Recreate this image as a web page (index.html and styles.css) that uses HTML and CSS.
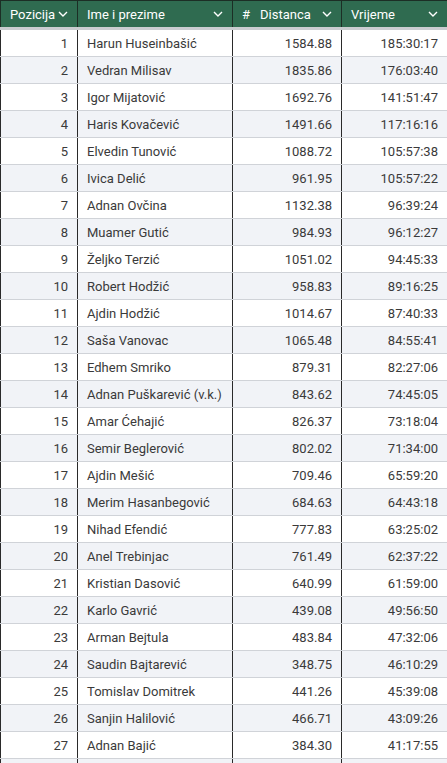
FILE: index.html
```html
<!DOCTYPE html>
<html lang="bs">
<head>
<meta charset="utf-8">
<link rel="stylesheet" href="styles.css">
</head>
<body>
<table class="grid">
<colgroup><col class="c1"><col class="c2"><col class="c3"><col class="c4"></colgroup>
<thead>
<tr>
<th><div class="hd"><span>Pozicija</span><svg class="chev" viewBox="0 0 10 6"><path d="M1 1l4 4 4-4" /></svg></div></th>
<th><div class="hd"><span>Ime i prezime</span><svg class="chev" viewBox="0 0 10 6"><path d="M1 1l4 4 4-4" /></svg></div></th>
<th><div class="hd"><span class="hash">#</span><span class="grow">Distanca</span><svg class="chev" viewBox="0 0 10 6"><path d="M1 1l4 4 4-4" /></svg></div></th>
<th><div class="hd"><span>Vrijeme</span><svg class="chev" viewBox="0 0 10 6"><path d="M1 1l4 4 4-4" /></svg></div></th>
</tr>
</thead>
<tbody>
<tr><td class="num">1</td><td>Harun Huseinbašić</td><td class="num">1584.88</td><td class="num">185:30:17</td></tr>
<tr><td class="num">2</td><td>Vedran Milisav</td><td class="num">1835.86</td><td class="num">176:03:40</td></tr>
<tr><td class="num">3</td><td>Igor Mijatović</td><td class="num">1692.76</td><td class="num">141:51:47</td></tr>
<tr><td class="num">4</td><td>Haris Kovačević</td><td class="num">1491.66</td><td class="num">117:16:16</td></tr>
<tr><td class="num">5</td><td>Elvedin Tunović</td><td class="num">1088.72</td><td class="num">105:57:38</td></tr>
<tr><td class="num">6</td><td>Ivica Delić</td><td class="num">961.95</td><td class="num">105:57:22</td></tr>
<tr><td class="num">7</td><td>Adnan Ovčina</td><td class="num">1132.38</td><td class="num">96:39:24</td></tr>
<tr><td class="num">8</td><td>Muamer Gutić</td><td class="num">984.93</td><td class="num">96:12:27</td></tr>
<tr><td class="num">9</td><td>Željko Terzić</td><td class="num">1051.02</td><td class="num">94:45:33</td></tr>
<tr><td class="num">10</td><td>Robert Hodžić</td><td class="num">958.83</td><td class="num">89:16:25</td></tr>
<tr><td class="num">11</td><td>Ajdin Hodžić</td><td class="num">1014.67</td><td class="num">87:40:33</td></tr>
<tr><td class="num">12</td><td>Saša Vanovac</td><td class="num">1065.48</td><td class="num">84:55:41</td></tr>
<tr><td class="num">13</td><td>Edhem Smriko</td><td class="num">879.31</td><td class="num">82:27:06</td></tr>
<tr><td class="num">14</td><td>Adnan Puškarević (v.k.)</td><td class="num">843.62</td><td class="num">74:45:05</td></tr>
<tr><td class="num">15</td><td>Amar Ćehajić</td><td class="num">826.37</td><td class="num">73:18:04</td></tr>
<tr><td class="num">16</td><td>Semir Beglerović</td><td class="num">802.02</td><td class="num">71:34:00</td></tr>
<tr><td class="num">17</td><td>Ajdin Mešić</td><td class="num">709.46</td><td class="num">65:59:20</td></tr>
<tr><td class="num">18</td><td>Merim Hasanbegović</td><td class="num">684.63</td><td class="num">64:43:18</td></tr>
<tr><td class="num">19</td><td>Nihad Efendić</td><td class="num">777.83</td><td class="num">63:25:02</td></tr>
<tr><td class="num">20</td><td>Anel Trebinjac</td><td class="num">761.49</td><td class="num">62:37:22</td></tr>
<tr><td class="num">21</td><td>Kristian Dasović</td><td class="num">640.99</td><td class="num">61:59:00</td></tr>
<tr><td class="num">22</td><td>Karlo Gavrić</td><td class="num">439.08</td><td class="num">49:56:50</td></tr>
<tr><td class="num">23</td><td>Arman Bejtula</td><td class="num">483.84</td><td class="num">47:32:06</td></tr>
<tr><td class="num">24</td><td>Saudin Bajtarević</td><td class="num">348.75</td><td class="num">46:10:29</td></tr>
<tr><td class="num">25</td><td>Tomislav Domitrek</td><td class="num">441.26</td><td class="num">45:39:08</td></tr>
<tr><td class="num">26</td><td>Sanjin Halilović</td><td class="num">466.71</td><td class="num">43:09:26</td></tr>
<tr><td class="num">27</td><td>Adnan Bajić</td><td class="num">384.30</td><td class="num">41:17:55</td></tr>
<tr class="cut"><td></td><td></td><td></td><td></td></tr>
</tbody>
</table>
</body>
</html>
```
FILE: styles.css
```css
html, body {
  margin: 0;
  padding: 0;
  background: #ffffff;
}
body {
  font-family: Roboto, "Liberation Sans", Arial, sans-serif;
  font-size: 13px;
  color: #3a3a3a;
  overflow: hidden;
}
.grid {
  border-collapse: collapse;
  table-layout: fixed;
  width: 447px;
}
.c1 { width: 77px; }
.c2 { width: 155px; }
.c3 { width: 109px; }
.c4 { width: 106px; }
.grid th {
  background: #2f6b50;
  color: #ffffff;
  font-weight: normal;
  height: 28px;
  padding: 0 9px;
  border-left: 1px solid #1c2e25;
  border-right: 1px solid #1c2e25;
  border-top: 1px solid #1c2e25;
  border-bottom: 3px solid #c9ccd0;
  text-align: left;
  box-sizing: border-box;
}
.hd {
  display: flex;
  align-items: center;
  justify-content: space-between;
  font-size: 13px;
}
.hash {
  margin-right: 10px;
  font-size: 13px;
}
.grow { flex: 1; }
.chev {
  width: 10px;
  height: 6px;
  fill: none;
  stroke: #ffffff;
  stroke-width: 1.4;
}
.grid td {
  height: 26px;
  padding: 0 9px;
  border: 1px solid #2a2a2a;
  border-top-color: #d0d3d8;
  border-bottom-color: #d0d3d8;
  white-space: nowrap;
  overflow: hidden;
}
.grid tbody tr:nth-child(even) td {
  background: #f1f3f7;
}
.grid td.num {
  text-align: right;
}
```
